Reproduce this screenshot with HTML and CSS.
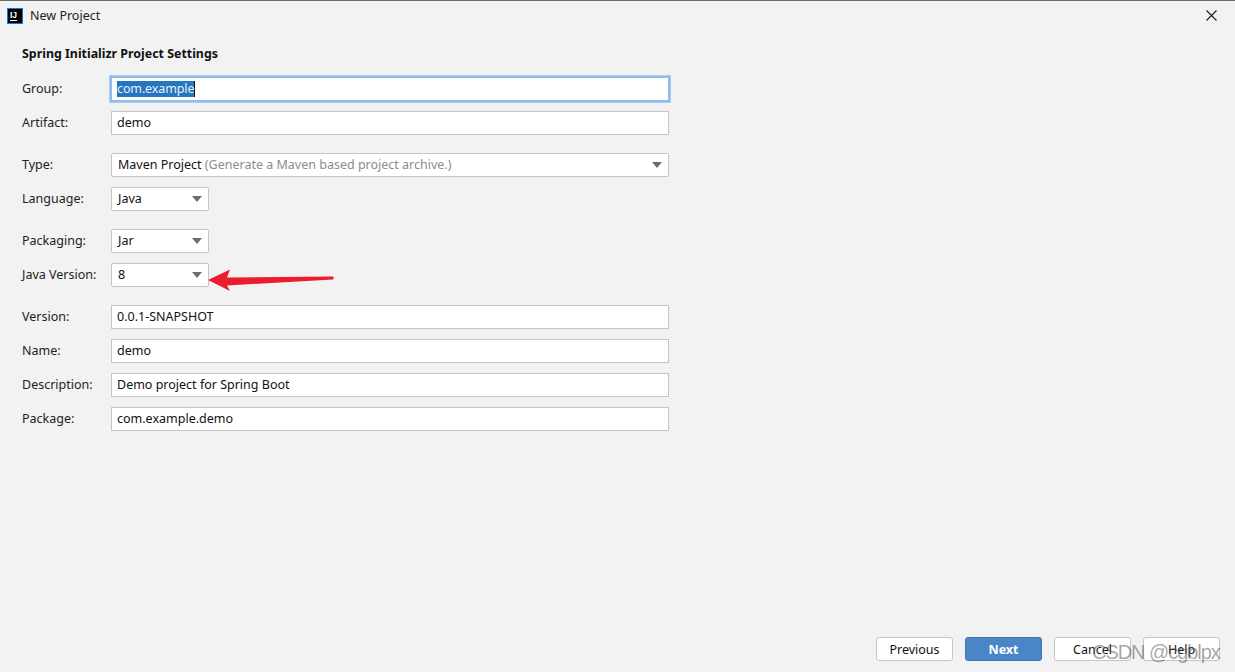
FILE: index.html
```html
<!DOCTYPE html>
<html lang="en">
<head>
<meta charset="utf-8">
<title>New Project</title>
<link rel="stylesheet" href="styles.css">
</head>
<body>
<div class="dialog">
  <header class="titlebar">
    <svg class="logo" width="16" height="16" viewBox="0 0 16 16"><rect x="0.5" y="0.5" width="15" height="15" fill="#000" stroke="#1a76d2"/><rect x="3" y="12" width="7" height="1" fill="#fff"/><text x="3" y="9.5" class="logo-text">IJ</text></svg>
    <span class="title">New Project</span>
    <svg class="close" width="11" height="11" viewBox="0 0 11 11"><path d="M0.5 0.5L10.5 10.5M10.5 0.5L0.5 10.5" stroke="#1a1a1a" stroke-width="1.1" fill="none"/></svg>
  </header>
  <main class="content">
    <h1 class="heading">Spring Initializr Project Settings</h1>
    <div class="form">
      <div class="row"><label>Group:</label><div class="field focus"><span class="sel">com.example</span></div></div>
      <div class="row"><label>Artifact:</label><div class="field">demo</div></div>
      <div class="row sp"><label>Type:</label><div class="combo wide"><span class="value">Maven Project <span class="hint">(Generate a Maven based project archive.)</span></span><i class="caret"></i></div></div>
      <div class="row"><label>Language:</label><div class="combo"><span class="value">Java</span><i class="caret"></i></div></div>
      <div class="row sp"><label>Packaging:</label><div class="combo"><span class="value">Jar</span><i class="caret"></i></div></div>
      <div class="row"><label>Java Version:</label><div class="combo"><span class="value">8</span><i class="caret"></i></div></div>
      <div class="row sp"><label>Version:</label><div class="field">0.0.1-SNAPSHOT</div></div>
      <div class="row"><label>Name:</label><div class="field">demo</div></div>
      <div class="row"><label>Description:</label><div class="field">Demo project for Spring Boot</div></div>
      <div class="row"><label>Package:</label><div class="field">com.example.demo</div></div>
    </div>
  </main>
  <footer class="actions">
    <button class="btn">Previous</button>
    <button class="btn primary">Next</button>
    <button class="btn">Cancel</button>
    <button class="btn">Help</button>
  </footer>
</div>
<svg class="arrow" width="128" height="24" viewBox="0 0 128 24"><path d="M0 11L22 0.5L19 8.5L125 7.5Q126.5 9 125 10.5L19 16.5L22 22Z" fill="#ec1c2e"/></svg>
<div class="watermark">CSDN @cgblpx</div>
</body>
</html>
```
FILE: styles.css
```css
html, body { margin: 0; padding: 0; height: 100%; overflow: hidden; }
body { background: #f2f2f2; color: #111; font-family: "Noto Sans", "Open Sans", sans-serif; font-size: 12.5px; position: relative; }
.dialog { height: 672px; box-sizing: border-box; border-top: 1px solid #6e6e6e; display: flex; flex-direction: column; }
.titlebar { height: 29px; display: flex; align-items: center; padding: 0 18px 0 7px; flex: none; }
.logo { flex: none; }
.logo-text { font: 700 8.5px "Liberation Sans", sans-serif; fill: #fff; }
.title { margin-left: 7px; font-size: 12.5px; color: #222; }
.close { margin-left: auto; }
.content { flex: 1; padding: 0 0 0 22px; }
.heading { margin: 15px 0 15px; font-size: 12.4px; line-height: 17px; font-weight: 700; color: #111; }
.form { display: flex; flex-direction: column; gap: 10px; width: 647px; }
.row { display: flex; align-items: center; height: 24px; }
.row.sp { margin-top: 8px; }
.row label { width: 89px; flex: none; color: #222; padding-bottom: 2px; }
.field { flex: 1; height: 24px; box-sizing: border-box; background: #fff; border: 1px solid #c4c4c4; padding: 0 5px; line-height: 22px; }
.field.focus { box-shadow: 0 0 0 1px #8fbcec, 0 0 0 2px #a9cdf2; border-color: #8fbcec; }
.sel { background: #2675bf; color: #e8f2fb; display: inline-block; line-height: 16px; letter-spacing: -0.12px; border-right: 1px solid #111; }
.combo { width: 98px; height: 24px; box-sizing: border-box; background: #fff; border: 1px solid #c4c4c4; border-radius: 2px; padding: 0 6px; display: flex; align-items: center; justify-content: space-between; }
.combo.wide { flex: 1; }
.value { padding-bottom: 2px; }
.hint { color: #8c8c8c; }
.caret { width: 0; height: 0; border-left: 5px solid transparent; border-right: 5px solid transparent; border-top: 6px solid #6e6e6e; }
.actions { flex: none; display: flex; justify-content: flex-end; gap: 12px; padding: 0 15px 11px 0; }
.btn { width: 77px; height: 24px; box-sizing: border-box; background: #fff; border: 1px solid #c4c4c4; border-radius: 3px; font: inherit; color: #111; padding: 0; }
.btn.primary { background: #4a86c7; border-color: #3f78b6; color: #fff; font-weight: 700; }
.arrow { position: absolute; left: 208px; top: 269px; }
.watermark { position: absolute; left: 1092px; top: 641px; font: 20px "Liberation Sans", sans-serif; letter-spacing: -1.05px; color: rgba(90, 90, 90, 0.55); white-space: nowrap; }
```
